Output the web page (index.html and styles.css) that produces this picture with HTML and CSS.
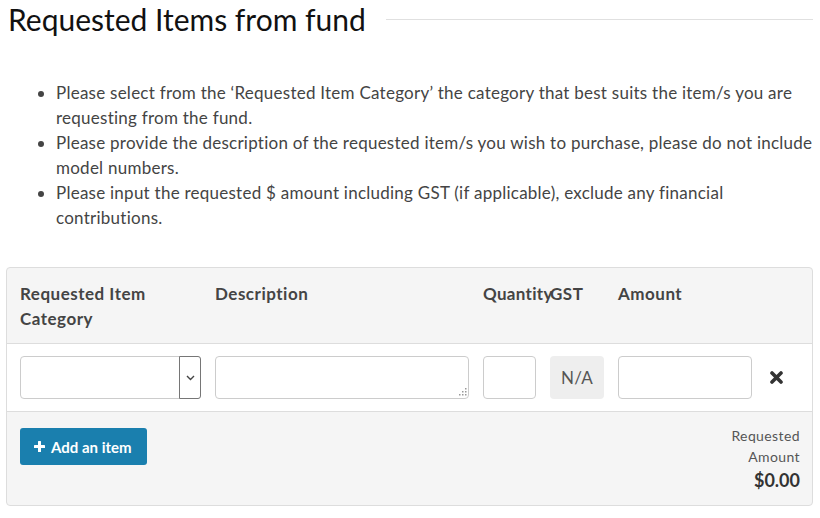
FILE: index.html
```html
<!DOCTYPE html>
<html lang="en">
<head>
<meta charset="utf-8">
<title>Requested Items from fund</title>
<link rel="stylesheet" href="styles.css">
</head>
<body>
<div class="page">
  <div class="title-row">
    <h1 class="title">Requested Items from fund</h1>
    <div class="title-rule"></div>
  </div>

  <ul class="notes">
    <li>Please select from the ‘Requested Item Category’ the category that best suits the item/s you are requesting from the fund.</li>
    <li>Please provide the description of the requested item/s you wish to purchase, please do not include model numbers.</li>
    <li>Please input the requested $ amount including GST (if applicable), exclude any financial contributions.</li>
  </ul>

  <div class="panel">
    <div class="grid head">
      <div class="th">Requested Item Category</div>
      <div class="th">Description</div>
      <div class="th nowrap">Quantity</div>
      <div class="th">GST</div>
      <div class="th">Amount</div>
      <div></div>
    </div>
    <div class="grid body">
      <div class="select">
        <span class="arrow">
          <svg width="9" height="6" viewBox="0 0 9 6"><path d="M1 1 L4.5 4.5 L8 1" fill="none" stroke="#444" stroke-width="1.4"/></svg>
        </span>
      </div>
      <div class="textarea-wrap">
        <textarea class="field textarea" rows="1"></textarea>
        <svg class="grip" width="10" height="10" viewBox="0 0 10 10">
          <g fill="#999">
            <rect x="8" y="1" width="1.5" height="1.5"/>
            <rect x="5" y="4" width="1.5" height="1.5"/>
            <rect x="8" y="4" width="1.5" height="1.5"/>
            <rect x="2" y="7" width="1.5" height="1.5"/>
            <rect x="5" y="7" width="1.5" height="1.5"/>
            <rect x="8" y="7" width="1.5" height="1.5"/>
          </g>
        </svg>
      </div>
      <div class="field"></div>
      <div class="na">N/A</div>
      <div class="field"></div>
      <div class="remove">
        <svg width="13" height="13" viewBox="0 0 13 13"><path d="M2 2 L11 11 M11 2 L2 11" stroke="#333" stroke-width="3.6" stroke-linecap="round"/></svg>
      </div>
    </div>
    <div class="foot">
      <button class="add-btn" type="button">
        <svg width="11" height="11" viewBox="0 0 11 11"><rect x="4" y="0" width="3" height="11" rx="0.6" fill="#fff"/><rect x="0" y="4" width="11" height="3" rx="0.6" fill="#fff"/></svg>
        <span>Add an item</span>
      </button>
      <div class="total">
        <div class="total-label">Requested<br>Amount</div>
        <div class="total-value">$0.00</div>
      </div>
    </div>
  </div>
</div>
</body>
</html>
```

FILE: styles.css
```css
* { box-sizing: border-box; }

body {
  margin: 0;
  background: #fff;
  font-family: Lato, "Open Sans", "Liberation Sans", sans-serif;
  color: #333;
}

.page {
  padding: 0 7px 0 6px;
}

.title-row {
  display: flex;
  align-items: center;
  gap: 20px;
  height: 38px;
}

.title {
  margin: 0 0 0 2px;
  font-size: 30px;
  font-weight: 400;
  line-height: 38px;
  color: #111;
  white-space: nowrap;
}

.title-rule {
  flex: 1;
  height: 1px;
  background: #e0e0e0;
}

.notes {
  margin: 42px 0 0;
  padding-left: 50px;
  font-size: 17px;
  line-height: 25px;
  letter-spacing: 0.25px;
  color: #444;
}

.panel {
  margin-top: 37px;
  border: 1px solid #ddd;
  border-radius: 4px;
  background: #f5f5f5;
  overflow: hidden;
}

.grid {
  display: grid;
  grid-template-columns: 181px 254px 53px 54px 134px 1fr;
  column-gap: 14px;
  padding: 0 13px;
}

.head {
  padding-top: 13px;
  padding-bottom: 12px;
  border-bottom: 1px solid #ddd;
}

.th {
  font-size: 17px;
  font-weight: 700;
  line-height: 25px;
  letter-spacing: 0.5px;
  color: #444;
}

.th.nowrap {
  white-space: nowrap;
  letter-spacing: 0.3px;
}

.body {
  background: #fff;
  padding-top: 12px;
  padding-bottom: 12px;
  border-bottom: 1px solid #ddd;
  align-items: center;
}

.select,
.field {
  height: 43px;
  border: 1px solid #ccc;
  border-radius: 4px;
  background: #fff;
}

.select {
  display: flex;
  justify-content: flex-end;
}

.arrow {
  width: 22px;
  margin: -1px -1px -1px 0;
  border: 1px solid #767676;
  border-radius: 0 3px 3px 0;
  display: flex;
  align-items: center;
  justify-content: center;
  background: #fff;
}

.textarea-wrap {
  position: relative;
  height: 43px;
}

.textarea {
  display: block;
  width: 100%;
  margin: 0;
  padding: 6px 10px;
  font: inherit;
  resize: none;
  outline: none;
}

.grip {
  position: absolute;
  right: 2px;
  bottom: 2px;
}

.na {
  height: 43px;
  border-radius: 4px;
  background: #eee;
  display: flex;
  align-items: center;
  justify-content: center;
  font-size: 17px;
  letter-spacing: 0.3px;
  color: #555;
}

.remove {
  display: flex;
  align-items: center;
  padding-left: 4px;
}

.foot {
  display: flex;
  justify-content: space-between;
  align-items: flex-start;
  padding: 15px 12px 12px 13px;
}

.add-btn {
  display: flex;
  align-items: center;
  gap: 6px;
  height: 37px;
  width: 127px;
  margin-top: 1px;
  padding: 0 0 0 14px;
  border: none;
  border-radius: 3px;
  background: #1a7fae;
  color: #fff;
  font-family: Lato, "Open Sans", "Liberation Sans", sans-serif;
  font-size: 15px;
  font-weight: 700;
  cursor: pointer;
}

.total {
  margin-top: -2px;
  text-align: right;
  color: #555;
}

.total-label {
  font-size: 14px;
  line-height: 21px;
  letter-spacing: 0.4px;
}

.total-value {
  margin-top: 1px;
  font-size: 18px;
  font-weight: 700;
  line-height: 25px;
  color: #333;
}
```
